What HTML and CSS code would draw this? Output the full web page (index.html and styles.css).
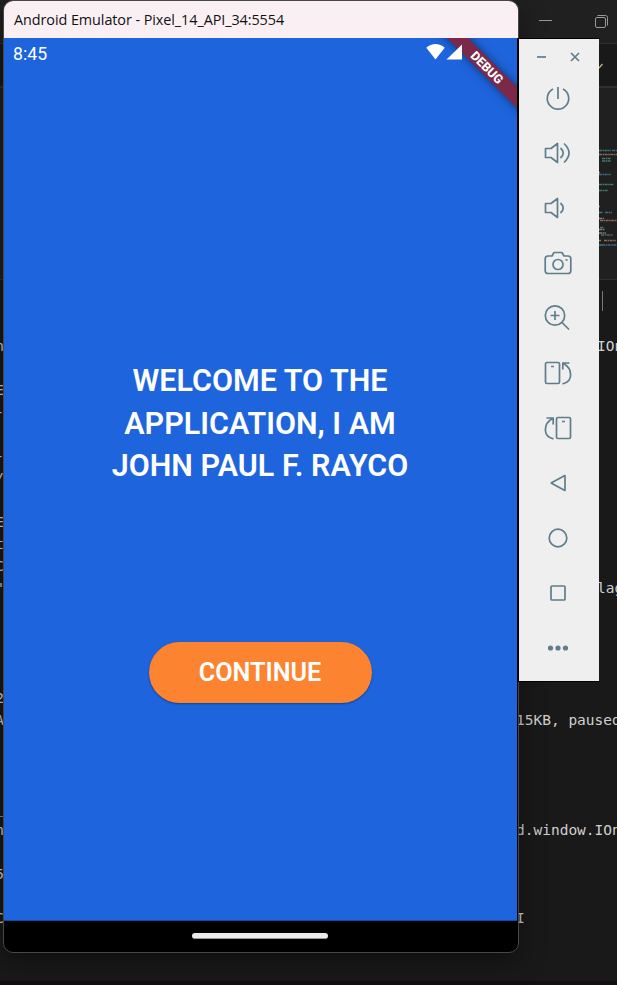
FILE: index.html
```html
<!DOCTYPE html>
<html lang="en">
<head>
<meta charset="utf-8">
<title>Android Emulator</title>
<link rel="stylesheet" href="styles.css">
</head>
<body>
<div class="desktop">
  <div class="editor">
    <div class="editor-title">
      <svg width="80" height="40" viewBox="0 0 80 40" fill="none" stroke="#999"><path d="M2 20.500h13"/><rect x="58.500" y="17.500" width="10" height="10" rx="1.500"/><path d="M60.500 15.500h8q2 0 2 2v8"/></svg>
    </div>
    <div class="editor-tabs"><svg width="8" height="8" viewBox="0 0 8 8" fill="none" stroke="#c8b080" stroke-width="1.300"><path d="M0 5l-1 1.500M0 6L3.500 2"/></svg></div>
    <div class="editor-code">
      <svg width="18" height="192" viewBox="599 88 18 192" fill="none" stroke-width="1.500" stroke-dasharray="3 .6 1.500 .5" opacity=".7">
        <g stroke="#4ba08f"><path d="M599 150.500h12M602 158.500h9M602 161h9M599 184.500h15M599 190.500h9M599 212.500h4M600 227.500h4M599 245h3"/></g>
        <g stroke="#b9886f"><path d="M599 154.500h18M600 220.500h17M604 240.500h12"/></g>
        <g stroke="#5089b0"><path d="M612 150.500h5M599 174.500h12M605 212.500h7M601 235h12M602 245h15"/></g>
        <g stroke="#aaa98a"><path d="M599 172.500h1M599 206.500h1M599 218.500h5M599 229.500h6M599 233h7M599 240.500h2"/></g>
      </svg>
    </div>
    <div class="console-bar"><i></i></div>
    <div class="console">
      <p><b>n</b><span class="far">IOn</span></p>
      <p></p>
      <p><b>E</b></p>
      <p><b>-</b></p>
      <p></p>
      <p><b>-</b></p>
      <p><b>/</b></p>
      <p></p>
      <p><b>E</b></p>
      <p><b>t</b></p>
      <p><b>C</b></p>
      <p><b>"</b><span class="far">lag</span></p>
      <p></p><p></p><p></p><p></p>
      <p><b>2</b></p>
      <p><b>A</b><span>15KB, paused</span></p>
      <p></p><p></p><p></p>
      <p><b>_</b></p>
      <p><b>n</b><span>d.window.IOn</span></p>
      <p></p>
      <p><b>5</b></p>
      <p></p>
      <p><b>C</b><span>I</span></p>
    </div>
  </div>

  <main class="emulator">
    <header class="titlebar">Android Emulator - Pixel_14_API_34:5554</header>
    <section class="screen">
      <div class="status">
        <time>8:45</time>
        <svg width="38" height="18" viewBox="0 0 38 18" fill="#fff"><path d="M9.500 16.500L.3 4.800Q4.500 1.100 9.500 1.100T18.700 4.800z"/><path d="M36 1.500v15H20.500z"/></svg>
      </div>
      <div class="debug">DEBUG</div>
      <div class="content">
        <h1>WELCOME TO THE<br>APPLICATION, I AM<br>JOHN PAUL F. RAYCO</h1>
        <button>CONTINUE</button>
      </div>
    </section>
    <footer class="navbar"><i></i></footer>
  </main>

  <aside class="toolbar">
    <div class="window-actions">
      <svg width="10" height="10" viewBox="0 0 10 10"><path d="M0 5h9"/></svg>
      <svg width="10" height="10" viewBox="0 0 10 10"><path d="M1 1l8 8M9 1L1 9"/></svg>
    </div>
    <svg class="tool" viewBox="0 0 30 30"><path d="M15 4v12M10 6a10.700 10.700 0 1 0 10 0"/></svg>
    <svg class="tool" viewBox="0 0 30 30"><path d="M14.500 5.500v19l-6.500-5H2.500v-9H8zM17.500 10q5.500 5 0 10M21 5.500q10 9.500 0 19"/></svg>
    <svg class="tool" viewBox="0 0 30 30"><path d="M14.500 5.500v19l-6.500-5H2.500v-9H8zM17.500 10q5.500 5 0 10"/></svg>
    <svg class="tool" viewBox="0 0 30 30"><path d="M5 8h4l2-3.500h8L21 8h4q2.800 0 2.800 2.800v11.900q0 2.800-2.800 2.800H5q-2.800 0-2.800-2.800V10.800Q2.200 8 5 8z"/><circle cx="15" cy="16.500" r="5"/><path d="M22.500 12h2"/></svg>
    <svg class="tool" viewBox="0 0 30 30"><circle cx="12" cy="12.500" r="9.700"/><path d="M12 8v9M7.500 12.500h9M19 19.500l7 7"/></svg>
    <svg class="tool" viewBox="0 0 30 30"><rect x="2.500" y="4.500" width="14" height="21" rx="1.500"/><path d="M8 8.500h3M26.500 5h-6.700v6.500M20 5.200C30 10.500 30.500 23.500 19.500 25.800"/></svg>
    <svg class="tool" viewBox="0 0 30 30"><rect x="13.500" y="4.500" width="14" height="21" rx="1.500"/><path d="M19 8.500h3M3.500 5h6.700v6.500M10 5.200C0 10.500-.5 23.500 10.500 25.800"/></svg>
    <svg class="tool" viewBox="0 0 30 30"><path d="M22 8v14q0 .6-.6.300L8.500 15.300q-.5-.3 0-.6L21.400 7.700q.6-.3.6.3z"/></svg>
    <svg class="tool" viewBox="0 0 30 30"><circle cx="15" cy="15" r="8.800"/></svg>
    <svg class="tool" viewBox="0 0 30 30"><rect x="8" y="8" width="14" height="14" rx="1"/></svg>
    <svg class="tool dots" viewBox="0 0 30 30"><circle cx="7.500" cy="15" r="2.600"/><circle cx="15" cy="15" r="2.600"/><circle cx="22.500" cy="15" r="2.600"/></svg>
  </aside>
</div>
</body>
</html>
```
FILE: styles.css
```css
* { box-sizing: border-box; }
body { margin: 0; background: #191919; }
.desktop { position: relative; width: 617px; height: 985px; overflow: hidden; }

/* Code editor behind the emulator */
.editor { height: 100%; background: #191919; border-bottom: 4px solid #120f14; }
.editor-title { height: 44px; background: #202020; border-bottom: 1px solid #303030; display: flex; justify-content: flex-end; }
.editor-title svg { flex: none; }
.editor-tabs { height: 44px; border-bottom: 2px solid #303030; padding: 18px 10px 0 0; display: flex; justify-content: flex-end; }
.editor-code { height: 192px; background: #202020; border-bottom: 1px solid #303030; display: flex; justify-content: flex-end; }
.console-bar { height: 55px; padding: 11px 14px 0 0; display: flex; justify-content: flex-end; }
.console-bar i { width: 1px; height: 20px; background: #777; }
.console { font: 14.5px/22px "DejaVu Sans Mono", monospace; color: #cfcfcf; }
.console p { height: 22px; margin: 0; display: flex; white-space: pre; overflow: hidden; }
.console b { width: 4px; flex: none; display: flex; justify-content: flex-end; overflow: hidden; font-weight: 400; }
.console span { margin-left: 512px; }
.console .far { margin-left: 593px; }

/* Emulator window */
.emulator { position: absolute; left: 3px; top: 0; width: 516px; height: 953px; display: flex; flex-direction: column; background: #000; border: 1px solid #474747; border-radius: 10px; overflow: hidden; box-shadow: 0 8px 28px rgba(0, 0, 0, .4); }
.titlebar { height: 37px; flex: none; padding-left: 10px; background: #faf0f4; color: #111; font: 14.4px/37px "Open Sans", sans-serif; letter-spacing: -.07px; white-space: nowrap; }
.screen { position: relative; flex: 1; width: 513px; display: flex; flex-direction: column; background: #1e64dc; border-bottom: 1px solid #164aa2; overflow: hidden; font-family: Roboto, sans-serif; color: #fff; }
.status { position: relative; z-index: 1; height: 34px; padding: 5px 53px 0 9px; display: flex; justify-content: space-between; font-size: 17.700px; line-height: 22px; }
.debug { position: absolute; left: 413px; top: 22px; width: 140px; height: 15px; transform: rotate(45deg); background: #7c2849; box-shadow: 0 0 8px rgba(0, 0, 0, .5); text-align: center; font-size: 12.500px; font-weight: 800; line-height: 15px; }
.content { display: flex; flex-direction: column; align-items: center; padding: 288px 1px 0 0; }
h1 { margin: 0; font-size: 30.500px; font-weight: 600; line-height: 42.700px; text-align: center; white-space: nowrap; }
button { width: 223px; height: 61px; margin-top: 154px; padding: 0; border: 0; border-radius: 31px; background: #fc832f; color: #fff; font: 600 25.200px/61px Roboto, sans-serif; box-shadow: 0 1px 2px rgba(0, 0, 0, .35); }
.navbar { height: 31px; flex: none; display: flex; justify-content: center; padding: 12px 0 0; }
.navbar i { width: 136px; height: 6px; border-radius: 3px; background: #ebebeb; border-bottom: 1px solid #999; margin-right: 3px; }

/* Emulator controls */
.toolbar { position: absolute; left: 518px; top: 38px; width: 81px; height: 644px; background: #efefef; border: solid #000; border-width: 1px 0 1px 1px; display: flex; flex-direction: column; align-items: center; }
.toolbar svg { flex: none; fill: none; stroke: #5f7d8b; stroke-width: 1.700; stroke-linejoin: round; }
.window-actions { height: 44px; flex: none; width: 100%; padding: 12.500px 19px 0 18px; display: flex; justify-content: space-between; }
.tool { width: 30px; height: 30px; margin-bottom: 25px; margin-right: 2px; }
.toolbar .dots { fill: #5f7d8b; stroke: none; margin-bottom: 0; }
```
